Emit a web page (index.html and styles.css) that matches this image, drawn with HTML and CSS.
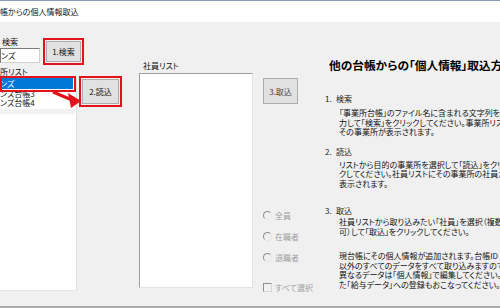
FILE: index.html
```html
<!DOCTYPE html>
<html lang="ja">
<head>
<meta charset="utf-8">
<link rel="stylesheet" href="styles.css">
</head>
<body>
<div class="window">
  <div class="topline"></div>
  <div class="titlebar">帳からの個人情報取込</div>
  <div class="dialog">
    <div class="pane-left">
      <div class="search-row">
        <div class="search-field">
          <div class="label search-label">検索</div>
          <div class="textbox">ンズ</div>
        </div>
        <div class="redframe frame-search"><div class="btn">1.検索</div></div>
      </div>
      <div class="list-row">
        <div class="list-field">
          <div class="label list-label">所リスト</div>
          <div class="listbox office-list">
            <div class="item selected">ンズ</div>
            <div class="item">ンズ台帳3</div>
            <div class="item">ンズ台帳4</div>
            <div class="item blurred"></div>
          </div>
        </div>
        <div class="redframe frame-read"><div class="btn">2.読込</div></div>
      </div>
    </div>
    <div class="pane-mid">
      <div class="emp-field">
        <div class="label emp-label">社員リスト</div>
        <div class="listbox emp-list"></div>
      </div>
      <div class="side">
        <div class="btn btn-import">3.取込</div>
        <div class="radios">
          <div class="opt"><span class="radio"></span>全員</div>
          <div class="opt"><span class="radio"></span>在職者</div>
          <div class="opt"><span class="radio"></span>退職者</div>
        </div>
        <div class="opt check-row"><span class="checkbox"></span>すべて選択</div>
      </div>
    </div>
    <div class="pane-right">
      <div class="help-title">他の台帳からの「個人情報」取込方法</div>
      <div class="help-h h1"><span class="num">1.</span>検索</div>
      <div class="help-p p1">「事業所台帳」のファイル名に含まれる文字列を入<br>力して「検索」をクリックしてください。事業所リストに<br>その事業所が表示されます。</div>
      <div class="help-h h2"><span class="num">2.</span>読込</div>
      <div class="help-p p2">リストから目的の事業所を選択して「読込」をクリッ<br>クしてください。社員リストにその事業所の社員が<br>表示されます。</div>
      <div class="help-h h3"><span class="num">3.</span>取込</div>
      <div class="help-p p3a">社員リストから取り込みたい「社員」を選択（複数選択<br>可）して「取込」をクリックしてください。</div>
      <div class="help-p p3b">現台帳にその個人情報が追加されます。台帳ID<br>以外のすべてのデータをすべて取り込みますので、<br>異なるデータは「個人情報」で編集してください。ま<br>た「給与データ」への登録もおこなってください。</div>
    </div>
  </div>
  <div class="bottomstrip"></div>
  <div class="annot-sel"></div>
  <svg class="annot-arrow" width="34" height="24" viewBox="0 0 34 24">
    <line x1="3" y1="4" x2="22" y2="12" stroke="#e3131b" stroke-width="3"/>
    <polygon points="18,5 31,13 21,20" fill="#e3131b"/>
  </svg>
</div>
</body>
</html>
```

FILE: styles.css
```css
* { box-sizing: border-box; margin: 0; padding: 0; }
body {
  margin: 0;
  font-family: "Noto Sans CJK JP", "Noto Sans", sans-serif;
  font-feature-settings: "palt" 1;
  color: #111;
}
.window {
  width: 500px;
  height: 308px;
  overflow: hidden;
  position: relative;
  background: #f0f0f0;
}
.topline { height: 1px; background: #8c9bb7; }
.titlebar {
  height: 21px;
  background: #fff;
  font-size: 8px;
  line-height: 22px;
  white-space: nowrap;
}
.dialog { height: 284px; display: flex; background: #f0f0f0; }
.bottomstrip { height: 2px; background: #a8a8a8; }

.pane-left { width: 139px; flex: none; }
.search-row { display: flex; gap: 3px; padding-top: 15px; }
.search-field { width: 40px; }
.label { font-size: 8px; line-height: 10px; white-space: nowrap; }
.search-label { height: 11px; padding-left: 2px; }
.textbox {
  height: 15px;
  background: #fff;
  border: 1px solid;
  border-color: #7a7a7a #d0d0d0 #d0d0d0 #7a7a7a;
  font-size: 8px;
  line-height: 13px;
}
.redframe {
  border: 2px solid #e3131b;
  padding: 1px;
  background: #f0f0f0;
  display: flex;
}
.frame-search { width: 41px; height: 27px; margin-top: 1px; }
.btn {
  flex: 1;
  background: #e1e1e1;
  border: 1px solid #adadad;
  font-size: 8px;
  display: flex;
  align-items: center;
  justify-content: center;
  white-space: nowrap;
}
.list-row { display: flex; gap: 2px; margin-top: 2px; }
.list-field { width: 77px; }
.list-label { height: 10px; }
.listbox { background: #fff; }
.office-list {
  height: 214px;
  border-right: 1px solid #e0e0e0;
  border-bottom: 1px solid #e6e6e6;
  padding-top: 1px;
}
.item { font-size: 8px; line-height: 9px; height: 9px; white-space: nowrap; width: 73px; }
.item.selected { background: #0078d7; color: #fff; height: 11px; line-height: 11px; }
.item.blurred { margin-top: 2px; height: 5px; background: #f2f2f2; width: 75px; }
.frame-read { width: 43px; height: 31px; margin-top: 9px; }

.pane-mid { width: 161px; flex: none; display: flex; }
.emp-field { width: 114px; padding-top: 39px; }
.emp-label { height: 12px; padding-left: 4px; }
.emp-list {
  height: 215px;
  border: 1px solid;
  border-color: #a0a0a0 #e3e3e3 #e3e3e3 #a0a0a0;
}
.side { margin-left: 10px; width: 37px; padding-top: 56px; }
.btn-import { width: 35px; height: 26px; color: #444; }
.radios { margin-top: 101px; }
.opt {
  height: 21px;
  display: flex;
  align-items: center;
  gap: 3px;
  font-size: 8px;
  color: #a0a0a0;
  white-space: nowrap;
}
.radio {
  flex: none;
  width: 9px;
  height: 9px;
  border-radius: 50%;
  border: 1px solid;
  border-color: #8e8e8e #e6e6e6 #e6e6e6 #8e8e8e;
}
.check-row { margin-top: 9px; height: 20px; }
.checkbox {
  flex: none;
  width: 9px;
  height: 9px;
  border: 1px solid;
  border-color: #8e8e8e #d8d8d8 #d8d8d8 #8e8e8e;
}

.pane-right { flex: 1; min-width: 0; padding-left: 25px; padding-top: 36px; white-space: nowrap; }
.help-title { margin-left: 4px; font-size: 11.7px; font-weight: bold; line-height: 14px; color: #000; }
.help-h { font-size: 8px; line-height: 10px; color: #222; }
.num { display: inline-block; width: 11px; }
.help-p { margin-left: 14px; font-size: 8px; line-height: 9.5px; color: #111; }
.h1 { margin-top: 22px; }
.p1 { margin-top: 4px; }
.h2 { margin-top: 10px; }
.p2 { margin-top: 3px; }
.h3 { margin-top: 18px; }
.p3a { margin-top: 1px; }
.p3b { margin-top: 15px; }

.annot-sel {
  position: absolute;
  left: 0;
  top: 76px;
  width: 76px;
  height: 16px;
  border: 2px solid #e3131b;
}
.annot-arrow { position: absolute; left: 50px; top: 88px; }
```
